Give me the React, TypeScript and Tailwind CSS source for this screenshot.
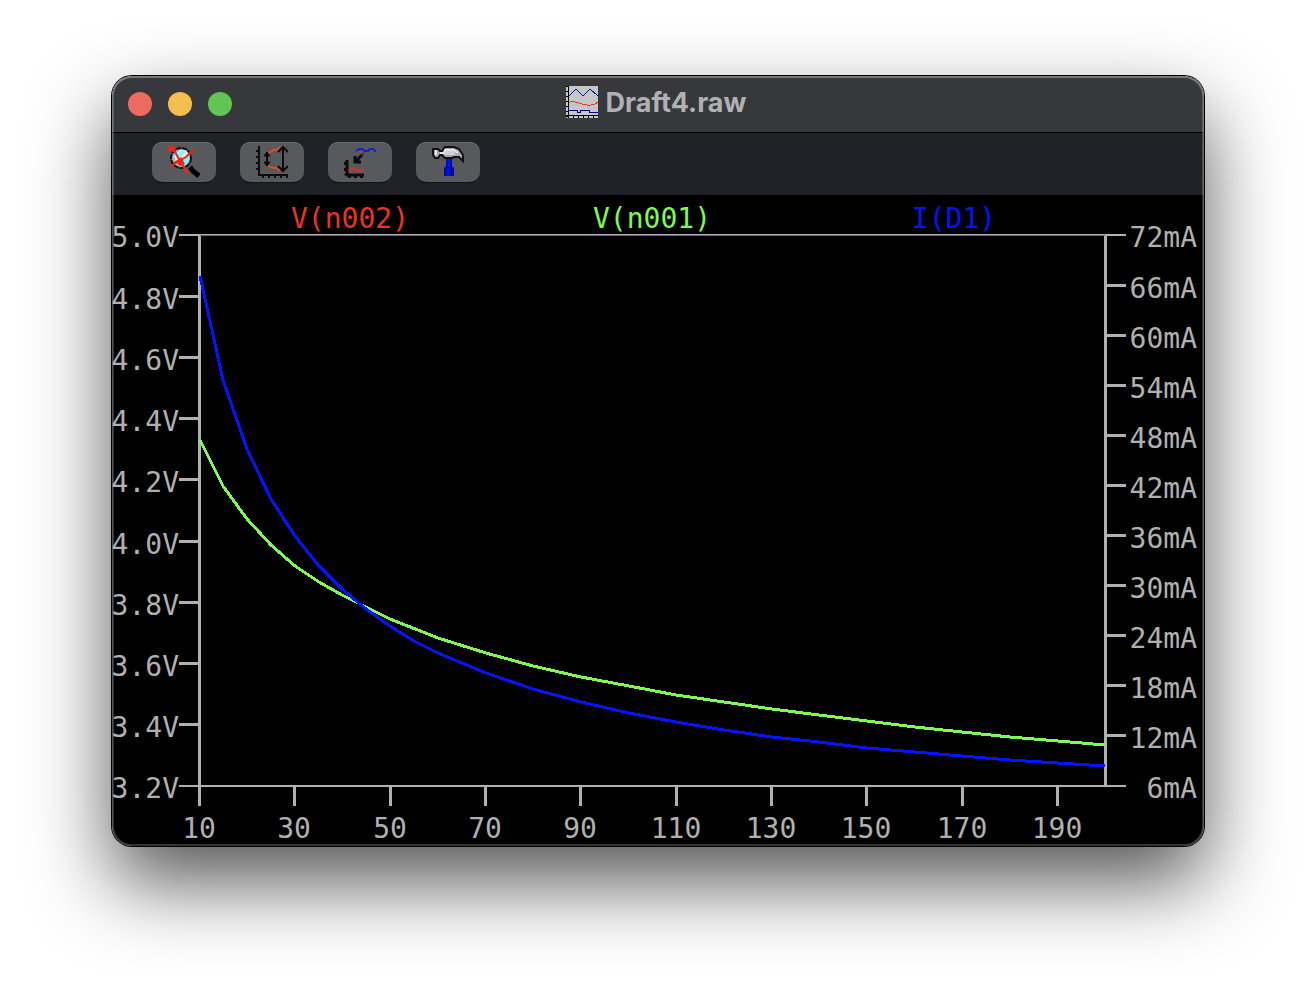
import React from 'react';

interface Trace {
  label: string;
  color: string;
  labelX: number;
  width: number;
  points: string;
}

const LEFT = 88;
const RIGHT = 994;
const TOP = 40;
const BOTTOM = 591;

const leftTicks = ['5.0V', '4.8V', '4.6V', '4.4V', '4.2V', '4.0V', '3.8V', '3.6V', '3.4V', '3.2V'];
const rightTicks = ['72mA', '66mA', '60mA', '54mA', '48mA', '42mA', '36mA', '30mA', '24mA', '18mA', '12mA', '6mA'];
const bottomTicks = ['10', '30', '50', '70', '90', '110', '130', '150', '170', '190'];

const traces: Trace[] = [
  {
    label: 'V(n002)',
    color: '#ea3323',
    labelX: 238,
    width: 1,
    points: '88,40.5 993,40.5',
  },
  {
    label: 'V(n001)',
    color: '#7dfc4d',
    labelX: 540,
    width: 3,
    points:
      '88,245 111,291 135,324 159,350 183,371 207,387 230,400 254,412 278,424 326,443 374,458 421,471 469,482 517,491 564,500 612,507 660,514 707,520 755,526 803,532 850,537 898,542 946,546 993,550',
  },
  {
    label: 'I(D1)',
    color: '#0014ff',
    labelX: 842,
    width: 3,
    points:
      '88,81 111,185 135,254 159,304 183,341 207,371 230,394 254,414 278,431 302,446 326,458 374,478 421,494 469,507 517,518 564,527 612,535 660,542 707,547 755,553 803,557 850,561 898,565 946,568 993,571',
  },
];

const tickY = (i: number, steps: number) => Math.floor(TOP + ((BOTTOM - TOP) * i) / steps) + 0.5;
const tickX = (i: number) => Math.round(87 + (858 * i) / 9) + 0.5;

const DocumentIcon = () => (
  <svg className="w-8 h-8" viewBox="0 0 32 32" shapeRendering="crispEdges" fill="none" aria-hidden="true">
    <rect width="32" height="32" fill="#c6c6c6" />
    <path d="M2.5 0V32M0 29.5H32" stroke="#000" />
    <path d="M1 0V32" stroke="#000" strokeWidth="2" strokeDasharray="1 4" />
    <path d="M2 31H32" stroke="#000" strokeWidth="2" strokeDasharray="1 4" />
    <path d="M3 10L10 3L17 10L24 3L32 10" stroke="#0010f5" />
    <path d="M3 16.5C8 14 11 17 16 18S26 21 32 16" stroke="#ea3323" />
    <path d="M3 24.5H11.5V26.5H14.5V24.5H23.5V26.5H32" stroke="#00007f" />
  </svg>
);

const ZoomOffIcon = () => (
  <svg className="w-8 h-8" viewBox="0 0 32 32" fill="none" aria-hidden="true">
    <circle cx="13" cy="12" r="9" fill="#aab4b6" />
    <path d="M12 4H18L21 8L15 12L8 16L6 10Z" fill="#dfe9ea" />
    <path d="M9 9L14 4L17 6L12 11ZM15 14L21 9L22 15L17 20Z" fill="#7ff5f3" />
    <circle cx="13" cy="12" r="10" stroke="#111" strokeWidth="2" strokeDasharray="5 1" />
    <path d="M22 21L25 25L31 30" stroke="#000" strokeWidth="5" />
    <path d="M1 2L6 4L12 15L20 28" stroke="#e8281c" strokeWidth="2" />
    <path d="M26 3L18 11L9 16L1 22" stroke="#e8281c" strokeWidth="2" />
    <path d="M0 0H6L8 7L3 5H0Z" fill="#e8281c" />
    <path d="M5 17L13 11L17 18L12 20L9 17Z" fill="#e8281c" />
  </svg>
);

const AutorangeIcon = () => (
  <svg className="w-8 h-8" viewBox="0 0 32 32" fill="none" stroke="#0c0c0c" strokeWidth="2" aria-hidden="true">
    <path d="M3 0V29H32" />
    <path d="M1 4V28" strokeDasharray="2 4" />
    <path d="M6 31H32" strokeDasharray="2 4" />
    <path d="M12 7L18 4H20L24 1M12 20L18 22H20L24 25" stroke="#e0482e" />
    <path d="M11 6V20M27 1V25" />
    <path d="M8 10L11 6L14 10ZM8 16L11 20L14 16Z" fill="#0c0c0c" strokeWidth="1" />
    <path d="M22 6L27 1L32 6M22 20L27 25L32 20" />
  </svg>
);

const AddTraceIcon = () => (
  <svg className="w-8 h-8" viewBox="0 0 32 32" fill="none" stroke="#0c0c0c" strokeWidth="2" aria-hidden="true">
    <path d="M3 14V29H20" strokeWidth="3" />
    <path d="M1 16V29" strokeDasharray="3 3" />
    <path d="M4 31H20" strokeDasharray="3 3" />
    <path d="M12 5L15 3H18L21 5H24L26 3H29L32 6" stroke="#1020dd" />
    <path d="M5 25L7 23H10L13 25H17L20 23" stroke="#d83028" />
    <path d="M18 9L11 16M11 10V16H17" strokeWidth="3" />
    <path d="M18 9L20 7" stroke="#7a1818" />
  </svg>
);

const HammerIcon = () => (
  <svg className="w-8 h-8" viewBox="0 0 32 32" fill="none" aria-hidden="true">
    <path d="M14 12H20V20L22 22V30H12V22L14 20Z" fill="#0008b0" />
    <path d="M17 13V21M16 22V29" stroke="#0014f0" strokeWidth="3" />
    <path
      d="M1 3H6L8 5H10L13 1H22L27 3L31 9V15L27 11H22L20 12H13L10 9H8L6 12H3L1 9Z"
      fill="#a9a9a9"
      stroke="#111"
      strokeWidth="2"
    />
    <path d="M4 4V9M8 7H13V4H22L26 7" stroke="#e4e4e4" strokeWidth="2" />
    <path d="M13 7H23" stroke="#d0d0d0" strokeWidth="4" />
  </svg>
);

const tools = [
  { name: 'Zoom to fit', Icon: ZoomOffIcon },
  { name: 'Autorange', Icon: AutorangeIcon },
  { name: 'Add trace', Icon: AddTraceIcon },
  { name: 'Control panel', Icon: HammerIcon },
];

const TitleBar = () => (
  <header className="relative flex h-14 items-center justify-center bg-[#37383b]">
    <div className="absolute left-4 flex gap-4">
      <button type="button" aria-label="Close" className="size-6 rounded-full bg-[#ec6a5e]" />
      <button type="button" aria-label="Minimize" className="size-6 rounded-full bg-[#f4bf4f]" />
      <button type="button" aria-label="Zoom" className="size-6 rounded-full bg-[#61c554]" />
    </div>
    <div className="flex items-center gap-2 pr-1 pb-1">
      <DocumentIcon />
      <h1 className="pt-0.5 font-['Inter',sans-serif] text-[27px] leading-8 font-bold text-[#b0b1b3]">Draft4.raw</h1>
    </div>
  </header>
);

const Toolbar = () => (
  <div className="flex gap-6 border-t border-black bg-[#1f2226] px-10 pt-[9px] pb-[13px]">
    {tools.map(({ name, Icon }) => (
      <button
        key={name}
        type="button"
        aria-label={name}
        className="flex h-10 w-16 items-center justify-center rounded-[10px] bg-[#58595c] shadow-[inset_0_1px_0_#6b6c6f,0_1px_1px_rgba(0,0,0,0.4)]"
      >
        <Icon />
      </button>
    ))}
  </div>
);

const Plot = () => (
  <svg
    className="block w-full bg-black font-['DejaVu_Sans_Mono',monospace] text-[28px]"
    viewBox="0 0 1092 651"
    role="img"
    aria-label="Waveform plot"
  >
    {/* Frame */}
    <g stroke="#b0b0b0" shapeRendering="crispEdges">
      <path d={`M67 ${TOP}H1014M67 ${BOTTOM}H1014`} strokeWidth="2" />
      <path d={`M87.5 ${TOP}V611M993.5 ${TOP}V${BOTTOM}`} strokeWidth="3" />
    </g>

    {/* Axis ticks and labels */}
    <g stroke="#b0b0b0" strokeWidth="3" shapeRendering="crispEdges">
      {leftTicks.slice(1, -1).map((label, i) => (
        <line key={label} x1="67" x2={LEFT} y1={tickY(i + 1, 9)} y2={tickY(i + 1, 9)} />
      ))}
      {rightTicks.slice(1, -1).map((label, i) => (
        <line key={label} x1={RIGHT} x2="1014" y1={tickY(i + 1, 11)} y2={tickY(i + 1, 11)} />
      ))}
      {bottomTicks.slice(1).map((label, i) => (
        <line key={label} x1={tickX(i + 1)} x2={tickX(i + 1)} y1={BOTTOM} y2="611" />
      ))}
    </g>
    <g fill="#b0b0b0">
      {leftTicks.map((label, i) => (
        <text key={label} x="67" y={Math.ceil(52 + ((BOTTOM - TOP) * i) / 9)} textAnchor="end">
          {label}
        </text>
      ))}
      {rightTicks.map((label, i) => (
        <text key={label} x="1085" y={Math.ceil(52 + ((BOTTOM - TOP) * i) / 11)} textAnchor="end">
          {label}
        </text>
      ))}
      {bottomTicks.map((label, i) => (
        <text key={label} x={Math.round(87 + (858 * i) / 9)} y="643" textAnchor="middle">
          {label}
        </text>
      ))}
    </g>

    {/* Traces */}
    {traces.map((trace) => (
      <g key={trace.label}>
        <text x={trace.labelX} y="33" textAnchor="middle" fill={trace.color}>
          {trace.label}
        </text>
        <polyline
          points={trace.points}
          fill="none"
          stroke={trace.color}
          strokeWidth={trace.width}
          shapeRendering="crispEdges"
        />
      </g>
    ))}
  </svg>
);

export default function App() {
  return (
    <main className="min-h-screen bg-white px-28 pt-[76px] pb-36">
      <section className="relative rounded-[20px] shadow-[0_0_0_1px_#000,0_36px_80px_rgba(0,0,0,0.67)]">
        <div className="overflow-hidden rounded-[20px]">
          <TitleBar />
          <Toolbar />
          <Plot />
        </div>
        {/* Window edge highlight */}
        <div className="pointer-events-none absolute inset-0 rounded-[20px] shadow-[inset_0_0_0_2px_rgba(255,255,255,0.2),inset_0_1px_0_1px_rgba(255,255,255,0.15)]" />
      </section>
    </main>
  );
}
